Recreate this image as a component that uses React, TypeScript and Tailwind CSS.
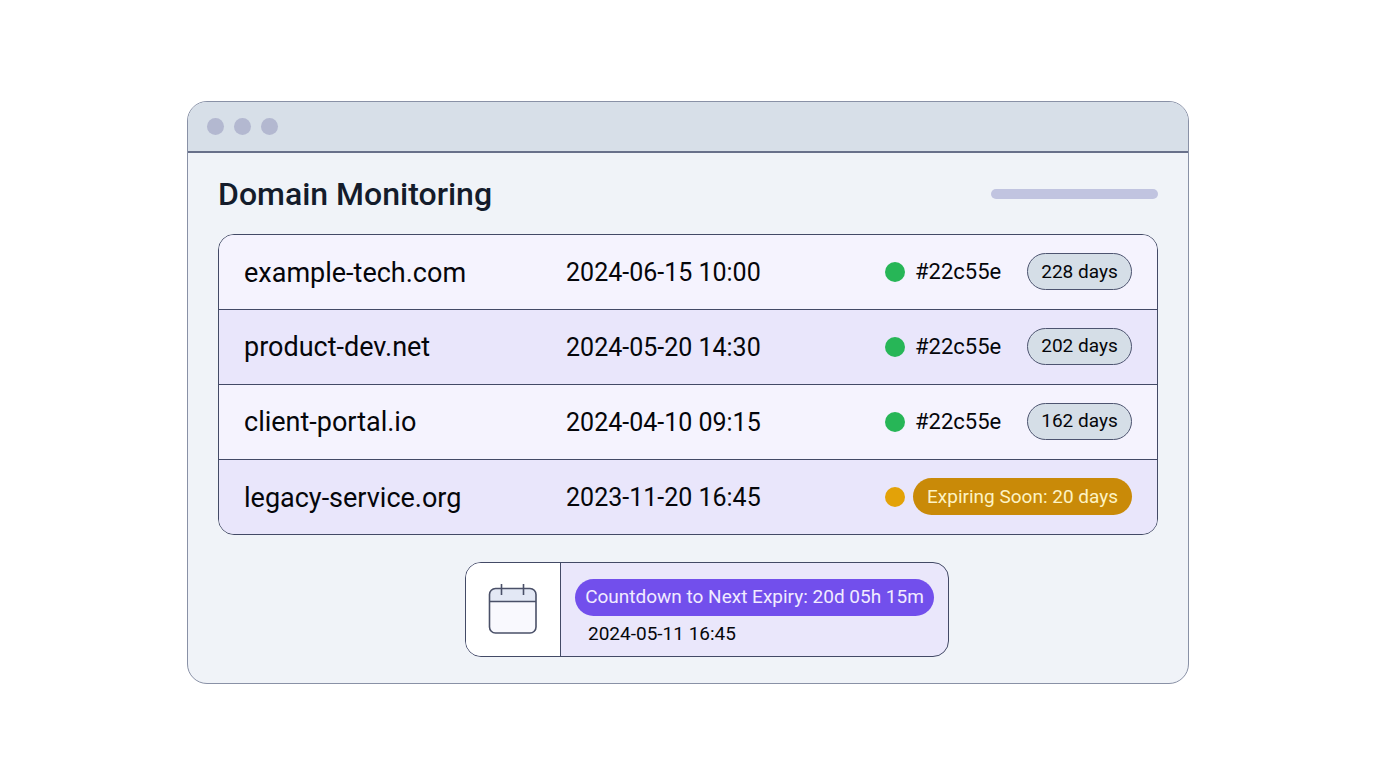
interface Domain {
  name: string
  checkedAt: string
  daysLeft: number
  status: 'active' | 'expiring'
}

const domains: Domain[] = [
  { name: 'example-tech.com', checkedAt: '2024-06-15 10:00', daysLeft: 228, status: 'active' },
  { name: 'product-dev.net', checkedAt: '2024-05-20 14:30', daysLeft: 202, status: 'active' },
  { name: 'client-portal.io', checkedAt: '2024-04-10 09:15', daysLeft: 162, status: 'active' },
  { name: 'legacy-service.org', checkedAt: '2023-11-20 16:45', daysLeft: 20, status: 'expiring' },
]

function CalendarIcon() {
  return (
    <svg width="50" height="54" viewBox="0 0 50 54" fill="none" aria-hidden="true">
      <rect x="1.5" y="5.5" width="46.500" height="44.500" rx="6" fill="#f9f9fe" />
      <path d="M1.5 18.500V11.500a6 6 0 0 1 6-6h34.500a6 6 0 0 1 6 6v7z" fill="#e3e8f5" />
      <g stroke="#4a5068" strokeWidth="1.6">
        <rect x="1.5" y="5.5" width="46.500" height="44.500" rx="6" />
        <path d="M1.5 18.500h46.500M13.5 1v11M35.500 1v11" />
      </g>
    </svg>
  )
}

function StatusCell({ domain }: { domain: Domain }) {
  if (domain.status === 'expiring') {
    return (
      <div className="flex items-center gap-2">
        <span className="w-5 h-5 rounded-full bg-[#e3a208] shrink-0" />
        <span className="flex-1 h-[37px] flex items-center justify-center rounded-full bg-[#c98a08] text-[19px] text-[#fdf3c4]">
          Expiring Soon: {domain.daysLeft} days
        </span>
      </div>
    )
  }

  return (
    <div className="flex items-center">
      <span className="w-5 h-5 rounded-full bg-[#27b657] shrink-0" />
      <span className="ml-[10px] text-[22px]">#22c55e</span>
      <span className="ml-auto w-[105px] h-[37px] flex items-center justify-center rounded-full border border-[#4d5470] bg-[#d5dee7] text-[19px]">
        {domain.daysLeft} days
      </span>
    </div>
  )
}

function DomainTable() {
  return (
    <div className="rounded-2xl border border-[#434a66] overflow-hidden">
      <table className="w-full table-fixed border-collapse text-left">
        <colgroup>
          <col className="w-[37%]" />
          <col />
          <col className="w-[272px]" />
        </colgroup>
        <tbody>
          {domains.map(domain => (
            <tr
              key={domain.name}
              className="h-[75px] first:h-[74px] odd:bg-[#f5f3fe] even:bg-[#e9e6fb] border-b border-[#434a66] last:border-b-0"
            >
              <th scope="row" className="p-0 pt-[2px] pl-[25px] text-[27px] font-normal">{domain.name}</th>
              <td className="p-0 pt-[2px] text-[25px]">{domain.checkedAt}</td>
              <td className="p-0 pr-[25px] whitespace-nowrap">
                <StatusCell domain={domain} />
              </td>
            </tr>
          ))}
        </tbody>
      </table>
    </div>
  )
}

function CountdownCard() {
  return (
    <section className="w-[484px] max-w-full mx-auto flex rounded-2xl border border-[#434a66] bg-[#eae7fb] overflow-hidden">
      <div className="w-[95px] shrink-0 flex items-center justify-center border-r border-[#434a66] bg-white">
        <CalendarIcon />
      </div>
      <div className="flex-1 px-[14px] pt-4 pb-2">
        <p className="h-[37px] flex items-center justify-center rounded-full bg-[#724fec] text-[19px] text-[#f1ebff] whitespace-nowrap">
          Countdown to Next Expiry: 20d 05h 15m
        </p>
        <p className="pl-[13px] mt-1 text-[19px] leading-7">2024-05-11 16:45</p>
      </div>
    </section>
  )
}

export default function App() {
  return (
    <div className="min-h-screen bg-white px-6 pt-[101px] pb-6 font-['Roboto',sans-serif] text-[#05060a]">
      <main className="max-w-[1002px] mx-auto rounded-[20px] border border-[#8991a6] bg-[#f0f3f8] overflow-hidden">
        <div className="h-[51px] flex items-center gap-[10px] px-[19px] bg-[#d7dfe8] border-b-2 border-[#68708a]">
          <span className="w-[17px] h-[17px] rounded-full bg-[#b3b8d0]" />
          <span className="w-[17px] h-[17px] rounded-full bg-[#b3b8d0]" />
          <span className="w-[17px] h-[17px] rounded-full bg-[#b3b8d0]" />
        </div>

        <div className="px-[30px] pt-[21px] pb-[26px]">
          <div className="flex items-center justify-between mb-5">
            <h1 className="text-[32px] leading-10 font-medium text-[#141c2b]">Domain Monitoring</h1>
            <span className="w-[167px] h-[10px] rounded-full bg-[#c1c4e0]" />
          </div>
          <DomainTable />
          <div className="mt-[27px] pl-[38px]">
            <CountdownCard />
          </div>
        </div>
      </main>
    </div>
  )
}
